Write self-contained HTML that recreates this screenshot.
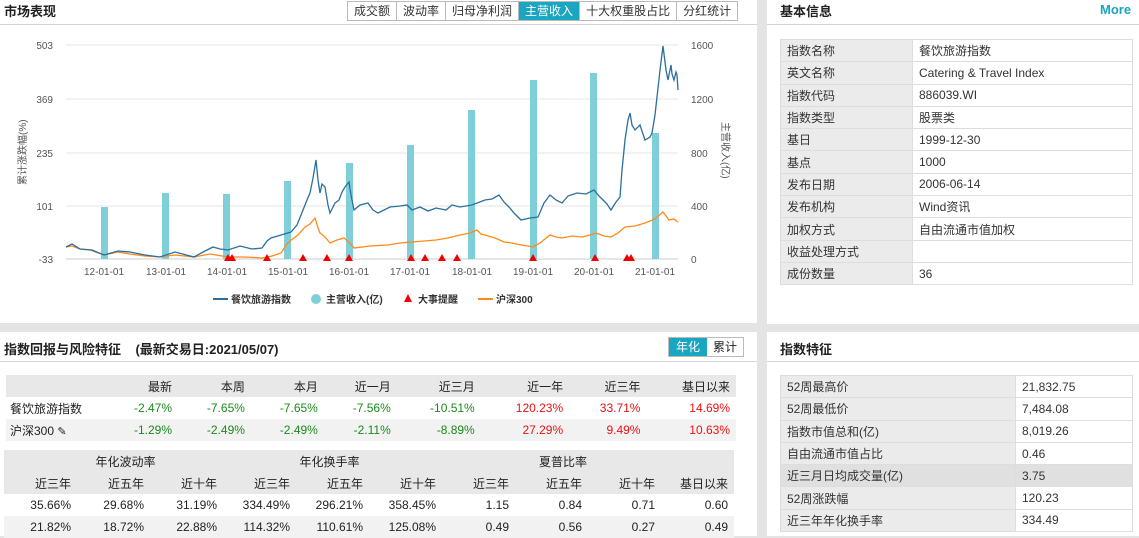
<!DOCTYPE html>
<html><head><meta charset="utf-8"><style>
*{margin:0;padding:0;box-sizing:border-box}
body{width:1139px;height:536px;overflow:hidden;background:#e4e4e4;font-family:"Liberation Sans","Noto Sans CJK SC",sans-serif;font-size:12px;color:#222;position:relative}
.p{position:absolute;background:#fff}
.h{position:absolute;font-weight:bold;font-size:13px}
.ln{position:absolute;height:1px;background:#d4d4d4}
.tabs{position:absolute;left:347px;top:1px;display:flex;border:1px solid #bbb;height:20px}
.tabs div{padding:0 6px;line-height:18px;font-size:12px;border-right:1px solid #bbb;color:#333}
.tabs .a{background:#1aa5c0;color:#fff}
table{border-collapse:collapse;position:absolute}
td{padding:0;height:22px;white-space:nowrap}
.t1 td{text-align:right;padding-right:6px}
.t2{table-layout:fixed}
.g{color:#1a8a1a}.r{color:#ee1111}
.ri td{border:1px solid #ddd;padding-left:6px;height:22.3px;color:#333}
.ri td:first-child{background:#ebebeb}
</style></head><body>
<div class="p" style="left:0;top:0;width:757px;height:323px"></div>
<div class="p" style="left:0;top:332px;width:757px;height:204px"></div>
<div class="p" style="left:767px;top:0;width:372px;height:324px"></div>
<div class="p" style="left:767px;top:332px;width:372px;height:204px"></div>

<div class="h" style="left:4px;top:1px">市场表现</div>
<div class="tabs"><div>成交额</div><div>波动率</div><div>归母净利润</div><div class="a">主营收入</div><div>十大权重股占比</div><div style="border:none">分红统计</div></div>
<div class="ln" style="left:0;top:24px;width:757px"></div>

<svg style="position:absolute;left:0;top:30px" width="757" height="285" viewBox="0 30 757 285" font-family="Liberation Sans" font-size="10" fill="#555">
<g stroke="#e6e6e6"><line x1="66" y1="45" x2="678" y2="45"/><line x1="66" y1="99" x2="678" y2="99"/><line x1="66" y1="153" x2="678" y2="153"/><line x1="66" y1="206" x2="678" y2="206"/><line x1="66" y1="259" x2="678" y2="259" stroke="#ccc"/></g>
<g text-anchor="end"><text x="53" y="49">503</text><text x="53" y="103">369</text><text x="53" y="157">235</text><text x="53" y="210">101</text><text x="53" y="263">-33</text></g>
<g><text x="691" y="49">1600</text><text x="691" y="103">1200</text><text x="691" y="157">800</text><text x="691" y="210">400</text><text x="691" y="263">0</text></g>
<text transform="translate(26,185) rotate(-90)" font-size="10" fill="#555" font-family="Liberation Sans,Noto Sans CJK SC">累计涨跌幅(%)</text>
<text transform="translate(722,122) rotate(90)" font-size="10" fill="#555" font-family="Liberation Sans,Noto Sans CJK SC">主营收入(亿)</text>
<g fill="#7fcfd8"><rect x="101" y="207" width="7" height="52"/><rect x="162" y="193" width="7" height="66"/><rect x="223" y="194" width="7" height="65"/><rect x="284" y="181" width="7" height="78"/><rect x="346" y="163" width="7" height="96"/><rect x="407" y="145" width="7" height="114"/><rect x="468" y="110" width="7" height="149"/><rect x="530" y="80" width="7" height="179"/><rect x="590" y="73" width="7" height="186"/><rect x="652" y="133" width="7" height="126"/></g>
<polyline fill="none" stroke="#ff8a1a" stroke-width="1.3" points="66,247 72,246 80,249 90,250 104,255 118,252 130,254 145,256 160,257 175,255 194,257 210,254 228,257 245,257 262,258 272,256 281,253 287,244 291,240 298,235 305,227 310,224 315,218 318,228 320,233 325,237 330,243 337,240 344,238 349,242 354,248 370,246 388,245 400,243 412,242 424,241 436,240 448,238 460,235 470,233 477,230 481,234 485,235 495,238 504,242 512,243 521,245 528,246 533,247 540,243 550,235 556,237 562,238 572,236 582,237 590,235 596,233 604,236 611,237 618,233 625,227 635,226 645,223 655,219 663,212 666,216 669,220 674,219 678,222"/>
<polyline fill="none" stroke="#2b6f9e" stroke-width="1.3" points="66,247 72,244 80,249 92,250 104,255 118,251 130,252 145,255 160,257 175,252 194,257 205,251 213,247 220,249 228,250 240,246 252,249 262,248 267,241 271,238 281,235 291,232 297,225 303,210 307,200 310,193 313,178 316,160 318,180 320,193 322,184 325,187 328,205 330,213 335,203 339,200 342,192 345,187 349,182 351,195 354,210 360,205 368,203 373,210 378,213 390,207 400,206 407,205 412,210 420,207 428,211 436,208 446,210 452,205 460,207 472,205 485,200 492,199 499,195 504,202 509,207 514,213 521,220 530,218 538,217 544,203 550,195 556,200 562,203 568,196 577,193 586,194 594,190 598,195 603,200 607,204 611,210 616,202 620,197 622,170 625,140 628,120 630,113 632,125 635,130 640,125 645,140 650,137 652,133 655,115 657,97 660,70 663,46 666,70 668,80 670,70 671,65 672,74 674,80 676,72 677,75 678,90"/>
<g fill="#e00">
<path d="M228 254l4 7h-8z"/><path d="M232 254l4 7h-8z"/><path d="M267 254l4 7h-8z"/><path d="M303 254l4 7h-8z"/><path d="M327 254l4 7h-8z"/><path d="M349 254l4 7h-8z"/><path d="M411 254l4 7h-8z"/><path d="M425 254l4 7h-8z"/><path d="M442 254l4 7h-8z"/><path d="M457 254l4 7h-8z"/><path d="M533 254l4 7h-8z"/><path d="M595 254l4 7h-8z"/><path d="M627 254l4 7h-8z"/><path d="M631 254l4 7h-8z"/></g>
<g text-anchor="middle"><text x="104" y="275">12-01-01</text><text x="166" y="275">13-01-01</text><text x="227" y="275">14-01-01</text><text x="288" y="275">15-01-01</text><text x="349" y="275">16-01-01</text><text x="410" y="275">17-01-01</text><text x="472" y="275">18-01-01</text><text x="533" y="275">19-01-01</text><text x="594" y="275">20-01-01</text><text x="655" y="275">21-01-01</text></g>
<g font-family="Liberation Sans,Noto Sans CJK SC" fill="#333" font-weight="bold">
<line x1="213" y1="299" x2="228" y2="299" stroke="#2b6f9e" stroke-width="2"/><text x="231" y="303">餐饮旅游指数</text>
<circle cx="316" cy="299" r="5" fill="#7fcfd8"/><text x="326" y="303">主营收入(亿)</text>
<path d="M408 294l4 8h-8z" fill="#e00"/><text x="418" y="303">大事提醒</text>
<line x1="478" y1="299" x2="493" y2="299" stroke="#ff8a1a" stroke-width="2"/><text x="496" y="303">沪深300</text></g>
</svg>

<div class="h" style="left:4px;top:339px">指数回报与风险特征 &nbsp;&nbsp;&nbsp;(最新交易日:2021/05/07)</div>
<div style="position:absolute;left:668px;top:337px;width:76px;height:20px;border:1px solid #bbb;display:flex;font-size:12px;line-height:18px"><div style="background:#1aa5c0;color:#fff;width:38px;text-align:center">年化</div><div style="width:36px;text-align:center">累计</div></div>
<div class="ln" style="left:0;top:361px;width:757px"></div>

<table class="t1" style="left:6px;top:375px;width:730px">
<tr style="background:#e8e8e8;height:22px"><td style="width:100px"></td><td style="width:72px">最新</td><td>本周</td><td>本月</td><td>近一月</td><td>近三月</td><td>近一年</td><td>近三年</td><td>基日以来</td></tr>
<tr><td style="text-align:left;padding-left:4px">餐饮旅游指数</td><td class="g">-2.47%</td><td class="g">-7.65%</td><td class="g">-7.65%</td><td class="g">-7.56%</td><td class="g">-10.51%</td><td class="r">120.23%</td><td class="r">33.71%</td><td class="r">14.69%</td></tr>
<tr style="background:#f2f2f2"><td style="text-align:left;padding-left:4px">沪深300 <span style="font-size:11px">✎</span></td><td class="g">-1.29%</td><td class="g">-2.49%</td><td class="g">-2.49%</td><td class="g">-2.11%</td><td class="g">-8.89%</td><td class="r">27.29%</td><td class="r">9.49%</td><td class="r">10.63%</td></tr>
</table>

<table class="t1 t2" style="left:4px;top:450px;width:730px">
<colgroup><col span="10" style="width:73px"></colgroup>
<tr style="background:#e8e8e8"><td colspan="3" style="text-align:center;padding-left:30px">年化波动率</td><td colspan="3" style="text-align:center">年化换手率</td><td colspan="4" style="text-align:center;padding-right:50px">夏普比率</td></tr>
<tr style="background:#e8e8e8"><td>近三年</td><td>近五年</td><td>近十年</td><td>近三年</td><td>近五年</td><td>近十年</td><td>近三年</td><td>近五年</td><td>近十年</td><td>基日以来</td></tr>
<tr><td>35.66%</td><td>29.68%</td><td>31.19%</td><td>334.49%</td><td>296.21%</td><td>358.45%</td><td>1.15</td><td>0.84</td><td>0.71</td><td>0.60</td></tr>
<tr style="background:#f2f2f2"><td>21.82%</td><td>18.72%</td><td>22.88%</td><td>114.32%</td><td>110.61%</td><td>125.08%</td><td>0.49</td><td>0.56</td><td>0.27</td><td>0.49</td></tr>
</table>

<div class="h" style="left:780px;top:1px">基本信息</div>
<div style="position:absolute;left:1100px;top:2px;color:#1aa5c0;font-weight:bold;font-size:13px">More</div>
<div class="ln" style="left:767px;top:24px;width:372px"></div>
<table class="ri" style="left:780px;top:39px;width:353px">
<tr><td style="width:132px">指数名称</td><td>餐饮旅游指数</td></tr>
<tr><td>英文名称</td><td>Catering &amp; Travel Index</td></tr>
<tr><td>指数代码</td><td>886039.WI</td></tr>
<tr><td>指数类型</td><td>股票类</td></tr>
<tr><td>基日</td><td>1999-12-30</td></tr>
<tr><td>基点</td><td>1000</td></tr>
<tr><td>发布日期</td><td>2006-06-14</td></tr>
<tr><td>发布机构</td><td>Wind资讯</td></tr>
<tr><td>加权方式</td><td>自由流通市值加权</td></tr>
<tr><td>收益处理方式</td><td></td></tr>
<tr><td>成份数量</td><td>36</td></tr>
</table>

<div class="h" style="left:780px;top:339px">指数特征</div>
<div class="ln" style="left:767px;top:361px;width:372px"></div>
<table class="ri" style="left:780px;top:375px;width:353px">
<tr><td style="width:235px">52周最高价</td><td>21,832.75</td></tr>
<tr><td>52周最低价</td><td>7,484.08</td></tr>
<tr><td>指数市值总和(亿)</td><td>8,019.26</td></tr>
<tr><td>自由流通市值占比</td><td>0.46</td></tr>
<tr style="background:#e0e0e0"><td style="background:#e0e0e0">近三月日均成交量(亿)</td><td>3.75</td></tr>
<tr><td>52周涨跌幅</td><td>120.23</td></tr>
<tr><td>近三年年化换手率</td><td>334.49</td></tr>
</table>
</body></html>
